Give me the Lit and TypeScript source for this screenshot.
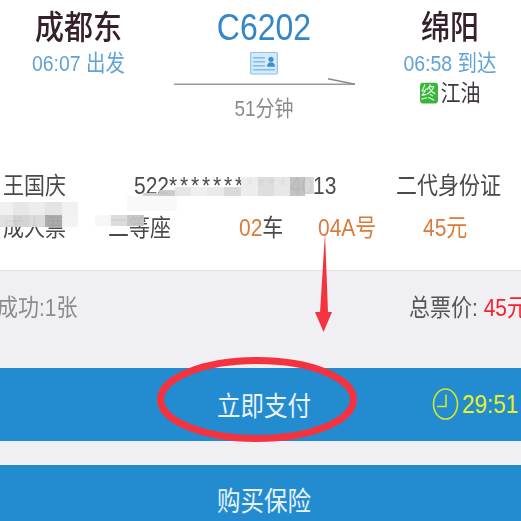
import { LitElement, html, css, svg } from "lit";
import { customElement } from "lit/decorators.js";

const mosaic: [number, number, number, number, string][] = [
  // id number mosaic
  [143, 193, 16, 3, "#d0d0d0"],
  [159, 190, 16, 6, "#c8c8c8"],
  [175, 187, 16, 9, "#e4e4e4"],
  [191, 187, 16, 9, "#eeeeee"],
  [207, 187, 17, 9, "#e9e9e9"],
  [224, 187, 17, 9, "#d8d8d8"],
  [241, 177, 17, 19, "#ececec"],
  [258, 177, 16, 19, "#dcdcdc"],
  [274, 177, 16, 19, "#e6e6e6"],
  [290, 177, 15, 19, "#bfbfbf"],
  [305, 177, 9, 17, "#d8d8d8"],
  [127, 196, 50, 15, "#f9f9f9"],
  // passenger type mosaic
  [0, 202, 13, 13, "#efefef"],
  [13, 202, 16, 13, "#e6e6e6"],
  [29, 202, 16, 13, "#ececec"],
  [45, 202, 17, 13, "#e3e3e3"],
  [62, 202, 16, 13, "#f0f0f0"],
  [0, 215, 13, 12, "#dedede"],
  [13, 215, 16, 12, "#d2d2d2"],
  [29, 215, 16, 12, "#d9d9d9"],
  [45, 215, 17, 12, "#a9a9a9"],
  [62, 215, 16, 12, "#f2f2f2"],
  // seat class mosaic
  [95, 215, 16, 11, "#f7f7f7"],
  [111, 215, 16, 11, "#dadada"],
  [127, 215, 17, 11, "#c4c4c4"],
];

@customElement("app-root")
export class AppRoot extends LitElement {
  static styles = css`
    :host {
      --k: 1.15;
      display: block;
      width: 521px;
      height: 521px;
      overflow: hidden;
      background: #fff;
      position: relative;
      font-family: "Liberation Sans", "Noto Sans CJK SC", sans-serif;
    }
    .page {
      display: flex;
      flex-direction: column;
      height: calc(521px / var(--k));
      transform: scaleY(var(--k));
      transform-origin: 0 0;
      filter: blur(0.55px);
    }
    .route {
      height: calc(139px / var(--k));
      display: grid;
      grid-template-columns: 157px 214px 1fr;
      padding-top: calc(8px / var(--k));
      box-sizing: border-box;
    }
    .station {
      display: flex;
      flex-direction: column;
      align-items: center;
    }
    .right { padding-left: 8px; }
    .name {
      font-size: 29px;
      line-height: calc(40px / var(--k));
      font-weight: 500;
      color: #35202c;
    }
    .time {
      font-size: 19.5px;
      line-height: calc(30px / var(--k));
      color: #5fa3d8;
    }
    .via {
      display: flex;
      align-items: center;
      gap: 3px;
      font-size: 20px;
      line-height: calc(30px / var(--k));
      color: #3f3640;
    }
    .badge {
      width: 18px;
      height: calc(21px / var(--k));
      border-radius: 3px;
      background: #3cb43c;
      color: #d8f5d8;
      font-size: 15px;
      line-height: calc(21px / var(--k));
      text-align: center;
    }
    .center {
      display: flex;
      flex-direction: column;
      align-items: center;
    }
    .code {
      font-size: 32px;
      line-height: calc(41px / var(--k));
      color: #3486c8;
    }
    .cert {
      margin-top: calc(3px / var(--k));
      display: block;
      height: calc(23px / var(--k));
    }
    .line {
      display: block;
      margin-left: -1px;
      height: calc(11px / var(--k));
    }
    .dur {
      font-size: 19px;
      line-height: calc(26px / var(--k));
      margin-top: calc(11px / var(--k));
      color: #8a8a8a;
    }
    .info {
      height: calc(132px / var(--k));
      box-sizing: border-box;
      border-bottom: 1px solid #d9d9de;
      padding: calc(34px / var(--k)) 0 0 3px;
      font-size: 21px;
      line-height: calc(28px / var(--k));
      color: #4a4a4a;
      display: flex;
      flex-direction: column;
      gap: calc(13px / var(--k));
    }
    .r1, .r2 { display: grid; white-space: nowrap; }
    .r1 { grid-template-columns: 131px 262px 1fr; }
    .r2 { grid-template-columns: 105px 131px 79px 105px 1fr; }
    .stars { letter-spacing: 2.8px; }
    .orange { color: #dc7a3c; }
    .summary {
      height: calc(97px / var(--k));
      background: #efeff4;
      box-sizing: border-box;
      padding-top: calc(22px / var(--k));
      display: flex;
      justify-content: space-between;
      font-size: 21px;
      line-height: calc(30px / var(--k));
      color: #555;
      white-space: nowrap;
    }
    .ok { color: #8c8c8c; margin-left: -3px; }
    .total { margin-right: -7px; }
    .price { color: #f5222d; }
    .btn {
      background: #238bd0;
      color: #e8f3fb;
      font-size: 23.5px;
      position: relative;
      display: flex;
      justify-content: center;
      padding-left: 7px;
      box-sizing: border-box;
    }
    .pay {
      height: calc(72px / var(--k));
      align-items: center;
      padding-top: calc(2px / var(--k));
    }
    .gap { height: calc(25px / var(--k)); background: #efeff4; }
    .buy {
      flex: 1;
      align-items: flex-start;
      padding-top: calc(21px / var(--k));
      line-height: calc(32px / var(--k));
    }
    .timer {
      position: absolute;
      left: 432px;
      top: calc(20px / var(--k));
      height: calc(33px / var(--k));
      display: flex;
      align-items: center;
      gap: 3px;
      color: #e6f02a;
      font-size: 22.5px;
    }
    .clock { display: block; height: calc(33px / var(--k)); }
    .marks {
      position: absolute;
      inset: 0;
      width: 521px;
      height: 521px;
      pointer-events: none;
      filter: blur(0.5px);
    }
  `;

  render() {
    return html`
      <div class="page">
        <section class="route">
          <div class="station">
            <div class="name">成都东</div>
            <div class="time">06:07 出发</div>
          </div>
          <div class="center">
            <div class="code">C6202</div>
            <svg class="cert" width="28" viewBox="0 0 28 23" preserveAspectRatio="none">
              <rect x="0.7" y="0.7" width="26.6" height="21.6" rx="1" fill="#d6ebf9" stroke="#8cc4ec" stroke-width="1.2"/>
              <path d="M3 6h12M3 10h12M3 14h12M3 18h22" stroke="#7fbce8" stroke-width="1.3" fill="none"/>
              <circle cx="21" cy="7.5" r="2.6" fill="#3f8fd0"/>
              <path d="M17 15c0-3 1.5-4.5 4-4.5s4 1.500 4 4.500z" fill="#3f8fd0"/>
            </svg>
            <svg class="line" width="186" viewBox="0 0 186 11" preserveAspectRatio="none">
              <path d="M3 9.500H184" stroke="#9a9a9a" stroke-width="1.600" fill="none"/>
              <path d="M157 4L184 9.500" stroke="#8a8a8a" stroke-width="1.500" fill="none"/>
            </svg>
            <div class="dur">51分钟</div>
          </div>
          <div class="station right">
            <div class="name">绵阳</div>
            <div class="time">06:58 到达</div>
            <div class="via"><span class="badge">终</span><span>江油</span></div>
          </div>
        </section>
        <section class="info">
          <div class="r1">
            <span>王国庆</span>
            <span>522<span class="stars">***********</span>4013</span>
            <span>二代身份证</span>
          </div>
          <div class="r2">
            <span>成人票</span>
            <span>二等座</span>
            <span><span class="orange">02</span>车</span>
            <span class="orange">04A号</span>
            <span class="orange">45元</span>
          </div>
        </section>
        <section class="summary">
          <span class="ok">成功:1张</span>
          <span class="total">总票价: <span class="price">45元</span></span>
        </section>
        <div class="btn pay">
          立即支付
          <div class="timer">
            <svg class="clock" width="27" viewBox="0 0 27 33" preserveAspectRatio="none">
              <ellipse cx="13.500" cy="16.500" rx="12" ry="15" fill="none" stroke="#d6e62a" stroke-width="1.600"/>
              <path d="M14 7V19H5" fill="none" stroke="#d6e62a" stroke-width="1.600"/>
            </svg>
            <span>29:51</span>
          </div>
        </div>
        <div class="gap"></div>
        <div class="btn buy">购买保险</div>
      </div>
      <svg class="marks" viewBox="0 0 521 521">
        ${mosaic.map(
          ([x, y, w, h, c]) =>
            svg`<rect x=${x} y=${y} width=${w} height=${h} fill=${c} opacity="0.95"></rect>`
        )}
        <ellipse cx="257" cy="399.500" rx="96.500" ry="39" fill="none" stroke="#f5333f" stroke-width="7"/>
        <path d="M325 233L328 313H320z" fill="#f5333f"/>
        <path d="M315 312H332L323.500 332z" fill="#f5333f"/>
      </svg>
    `;
  }
}
